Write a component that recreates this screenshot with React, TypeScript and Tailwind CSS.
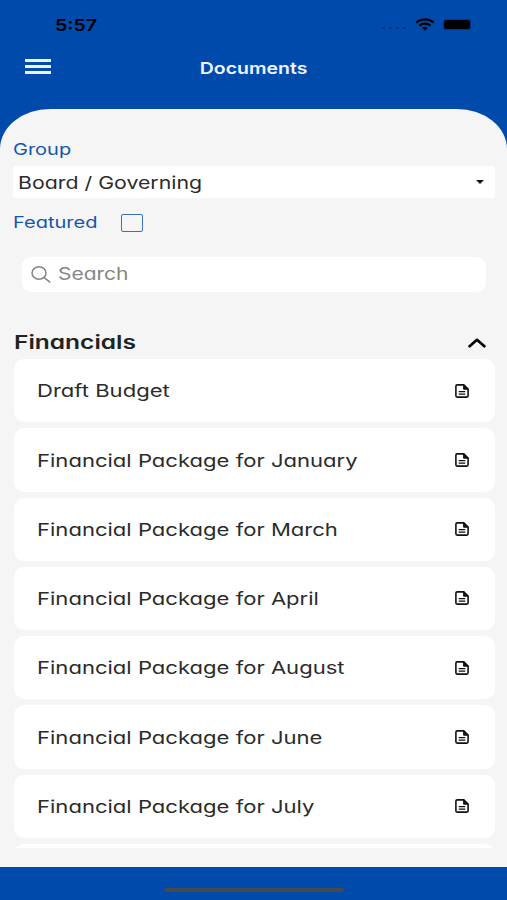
import type { ReactNode } from "react";

const documents = [
  "Draft Budget",
  "Financial Package for January",
  "Financial Package for March",
  "Financial Package for April",
  "Financial Package for August",
  "Financial Package for June",
  "Financial Package for July",
];

function Wide({ children, className = "" }: { children: ReactNode; className?: string }) {
  return (
    <span className={`inline-block origin-left whitespace-nowrap ${className}`}>
      {children}
    </span>
  );
}

function StatusBar() {
  return (
    <div className="flex h-12 items-center pl-[54.5px] pr-[32px] text-black">
      <Wide className="scale-x-[1.22] pt-px text-[16px] font-semibold leading-6">5:57</Wide>
      <div className="ml-auto flex items-center">
        <div className="mr-[9px] mt-2 flex gap-[4px]">
          {[0, 1, 2, 3].map((dot) => (
            <span key={dot} className="h-[2px] w-[3px] rounded-full bg-[#003480]" />
          ))}
        </div>
        <svg className="mr-[9px] h-[13px] w-[20px]" viewBox="0 0 20 13" fill="none" stroke="currentColor" strokeWidth="2.2">
          <path d="M1.2 4.6C6 .2 14 .2 18.8 4.6" />
          <path d="M4.4 7.7C7.5 5 12.5 5 15.6 7.7" />
          <path d="M10 12.5L6.9 9.8C8.7 8.4 11.3 8.4 13.1 9.8Z" fill="currentColor" stroke="none" />
        </svg>
        <span className="mr-px h-[9px] w-[26px] rounded-[2px] bg-black shadow-[0_0_0_1px_#003985]" />
        <span className="ml-[3px] h-[3px] w-px bg-[#003985]" />
      </div>
    </div>
  );
}

function DocumentIcon() {
  return (
    <svg className="h-[14px] w-[14px]" viewBox="0 0 14 14" fill="none" stroke="#111" strokeWidth="1.6">
      <path d="M2.2.9H8.8L13.1 5V11.8Q13.1 13.1 11.8 13.1H2.2Q.9 13.1.9 11.8V2.2Q.9.9 2.2.9Z" />
      <path d="M8.6.9V5.2H13.1Z" fill="#111" strokeWidth="1" />
      <path d="M3.7 7.6H10.3M3.7 10.2H10.3" strokeWidth="1.2" />
    </svg>
  );
}

function DocumentRow({ title }: { title: string }) {
  return (
    <button className="flex h-[63.25px] w-full shrink-0 items-center justify-between rounded-[10px] bg-white pl-[22.75px] pr-[26px] text-left">
      <Wide className="scale-x-[1.26] pt-[1.5px] text-[17.5px] text-[#2b2b2b]">{title}</Wide>
      <DocumentIcon />
    </button>
  );
}

export default function App() {
  return (
    <div className="flex h-[900px] w-[507px] flex-col overflow-hidden bg-[#004aab] font-['Inter',sans-serif] [font-feature-settings:'cv11']">
      <header className="h-[108.5px] shrink-0">
        <StatusBar />
        <div className="grid h-10 grid-cols-[1fr_auto_1fr] items-center px-[25px]">
          <button className="flex w-[26px] flex-col gap-[3px] pb-1" aria-label="Menu">
            <span className="h-[3px] w-full bg-[#eef4ff]" />
            <span className="h-[3px] w-full bg-[#eef4ff]" />
            <span className="h-[3px] w-full bg-[#eef4ff]" />
          </button>
          <h1 className="origin-center scale-x-[1.18] text-[16.5px] font-semibold text-[#eef4ff] [font-feature-settings:normal]">
            Documents
          </h1>
        </div>
      </header>

      <main className="flex min-h-0 flex-1 flex-col rounded-t-[50px_40px] bg-[#f5f5f5] pl-[13px] pr-3 pt-[28px]">
        <label className="h-[29.5px] text-[16px] leading-6 text-[#1555ae]">
          <Wide className="scale-x-[1.25]">Group</Wide>
        </label>
        <button className="flex h-8 shrink-0 items-center justify-between rounded-[3px] bg-white pl-[5px] pr-[11px]">
          <Wide className="scale-x-[1.235] pt-px text-[17.25px] text-[#2b2b2b]">Board / Governing</Wide>
          <svg className="h-[4px] w-[8px]" viewBox="0 0 8 4">
            <path d="M0 0H8L4 4Z" fill="#111" />
          </svg>
        </button>
        <div className="mt-3 flex h-6 shrink-0 items-center text-[#1555ae]">
          <Wide className="w-[108px] scale-x-[1.25] text-[16px]">Featured</Wide>
          <span className="mt-0.5 h-[18px] w-[22px] rounded-[2px] border border-[#3a71bd]" />
        </div>

        <div className="ml-[9px] mr-[9px] mt-[22.5px] flex h-[35px] shrink-0 items-center rounded-[9px] bg-white pl-[9px] text-[#858585]">
          <svg className="mr-[7px] h-[17px] w-[20px]" viewBox="0 0 20 17" fill="none" stroke="currentColor" strokeWidth="1.5">
            <ellipse cx="8" cy="7" rx="7" ry="6.2" />
            <path d="M13 11.4L19.2 16.3" />
          </svg>
          <Wide className="scale-x-[1.235] pt-[2px] text-[17px]">Search</Wide>
        </div>

        <section className="mt-[34px] flex min-h-0 flex-1 flex-col pl-px">
          <div className="flex h-[33.5px] shrink-0 items-center justify-between pr-[9px]">
            <Wide className="scale-x-[1.29] pt-px text-[19px] font-semibold text-[#222]">Financials</Wide>
            <svg className="mt-px h-[10px] w-[18px]" viewBox="0 0 18 10" fill="none" stroke="#000" strokeWidth="2.7" strokeLinecap="round" strokeLinejoin="round">
              <path d="M1.6 8.2L9 1.8L16.4 8.2" />
            </svg>
          </div>
          <div className="mb-[19px] flex min-h-0 flex-1 flex-col gap-1.5 overflow-hidden">
            {documents.map((title) => (
              <DocumentRow key={title} title={title} />
            ))}
            <div className="h-[63.25px] shrink-0 rounded-[10px] bg-white" />
          </div>
        </section>
      </main>

      <footer className="flex h-[33px] shrink-0 justify-center pt-[20.5px]">
        <span className="h-[4.5px] w-[180px] rounded-full bg-[#48494c]" />
      </footer>
    </div>
  );
}
